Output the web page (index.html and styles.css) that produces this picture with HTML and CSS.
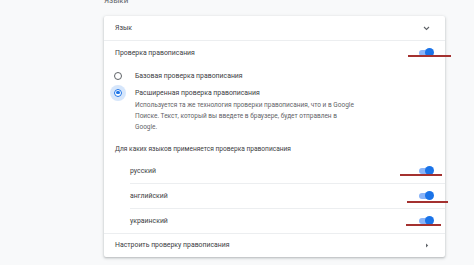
FILE: index.html
```html
<!DOCTYPE html>
<html lang="ru">
<head>
<meta charset="utf-8">
<link rel="stylesheet" href="styles.css">
</head>
<body>
<div class="page">
  <div class="heading">Языки</div>
  <div class="card">
    <div class="row row-lang">
      <span class="label">Язык</span>
      <svg class="chev" width="7" height="5" viewBox="0 0 7 5"><path d="M1 1 L3.5 3.5 L6 1" fill="none" stroke="#5f6368" stroke-width="1.1"/></svg>
    </div>
    <div class="row row-spell">
      <span class="label">Проверка правописания</span>
      <span class="toggle"><span class="knob"></span></span>
    </div>
    <div class="radios">
      <div class="radio-row">
        <span class="radio"></span>
        <span class="rlabel">Базовая проверка правописания</span>
      </div>
      <div class="radio-row sel">
        <span class="radio on"><span class="dot"></span></span>
        <div class="rtext">
          <div class="rlabel">Расширенная проверка правописания</div>
          <div class="desc">Используется та же технология проверки правописания, что и в Google<br>Поиске. Текст, который вы введете в браузере, будет отправлен в<br>Google.</div>
        </div>
      </div>
    </div>
    <div class="sub">Для каких языков применяется проверка правописания</div>
    <div class="langs">
      <div class="lrow"><span class="label">русский</span><span class="toggle"><span class="knob"></span></span></div>
      <div class="lrow"><span class="label">английский</span><span class="toggle"><span class="knob"></span></span></div>
      <div class="lrow"><span class="label">украинский</span><span class="toggle"><span class="knob"></span></span></div>
    </div>
    <div class="row row-custom">
      <span class="label">Настроить проверку правописания</span>
      <svg class="arrow" width="4" height="5" viewBox="0 0 4 5"><path d="M1 0.5 L3.2 2.5 L1 4.5 Z" fill="#5f6368"/></svg>
    </div>
  </div>
  <span class="mark m1"></span>
  <span class="mark m2"></span>
  <span class="mark m3"></span>
  <span class="mark m4"></span>
</div>
</body>
</html>
```
FILE: styles.css
```css
html, body {
  margin: 0;
  padding: 0;
  background: #f8f9fa;
  width: 474px;
  height: 265px;
  overflow: hidden;
}
.page {
  position: relative;
  padding-left: 104px;
  font-family: Roboto, "Noto Sans", sans-serif;
  color: #3c4043;
}
.heading {
  height: 20px;
  margin-top: -4px;
  font-size: 8px;
  line-height: 10px;
  color: #5f6368;
}
.card {
  width: 341px;
  background: #fff;
  border-radius: 2px;
  box-shadow: 0 1px 2px rgba(60,64,67,.25), 0 1px 3px 1px rgba(60,64,67,.1);
  font-size: 6.9px;
}
.row {
  display: flex;
  align-items: center;
  justify-content: space-between;
  padding: 0 14px 0 11px;
}
.row-lang {
  height: 24px;
  border-bottom: 1px solid #eceef0;
}
.row-spell {
  height: 23px;
}
.chev { margin-right: 1px; }
.toggle {
  position: relative;
  width: 13px;
  height: 6px;
  border-radius: 3px;
  background: #8ab4f8;
  margin-right: -1px;
}
.knob {
  position: absolute;
  right: -2px;
  top: -1.5px;
  width: 9px;
  height: 9px;
  border-radius: 50%;
  background: #1a73e8;
}
.radios {
  padding: 7px 0 0 10px;
}
.radio-row {
  display: flex;
  align-items: flex-start;
  gap: 13px;
}
.radio-row + .radio-row { margin-top: 7px; }
.radio-row .rlabel { line-height: 10px; }
.radio {
  flex: none;
  width: 6px;
  height: 6px;
  border: 1.2px solid #5f6368;
  border-radius: 50%;
  position: relative;
  margin-top: 0.8px;
}
.radio.on {
  border-color: #1a73e8;
  box-shadow: 0 0 0 4px rgba(26,115,232,.18);
}
.dot {
  position: absolute;
  left: 1.3px;
  top: 1.3px;
  width: 3.4px;
  height: 3.4px;
  border-radius: 50%;
  background: #1a73e8;
}
.rtext { width: 240px; }
.desc {
  color: #5f6368;
  font-size: 6.5px;
  line-height: 11px;
  margin-top: 1.5px;
  white-space: nowrap;
}
.sub {
  padding: 12px 0 0 11px;
  height: 26px;
  box-sizing: border-box;
  font-size: 6.6px;
  color: #3c4043;
}
.langs { padding-left: 26px; }
.lrow {
  height: 24px;
  display: flex;
  align-items: center;
  justify-content: space-between;
  padding-right: 14px;
  border-bottom: 1px solid #eceef0;
}
.lrow:last-child { margin-left: -26px; padding-left: 26px; }
.row-custom { height: 23px; }
.arrow { margin-right: 2px; }
.mark {
  position: absolute;
  height: 1.5px;
  background: #a4312f;
}
.m1 { left: 408px; top: 59px; width: 43px; }
.m2 { left: 400px; top: 178px; width: 42px; }
.m3 { left: 407px; top: 205px; width: 41px; }
.m4 { left: 406px; top: 228px; width: 35px; }
```
